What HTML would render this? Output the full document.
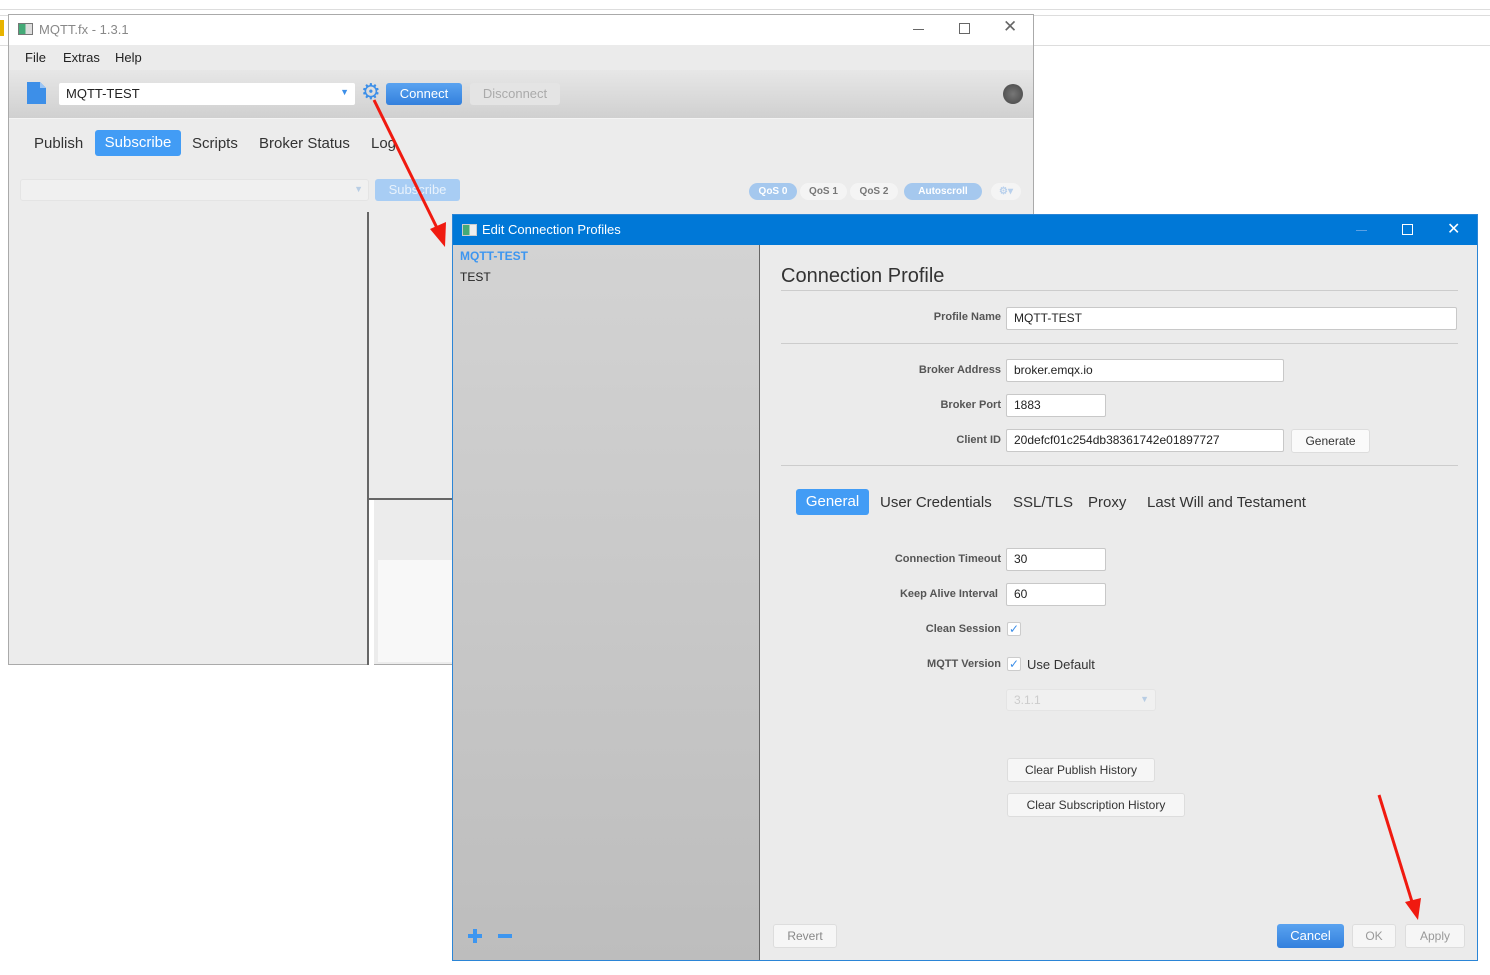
<!DOCTYPE html>
<html><head><meta charset="utf-8"><style>
*{box-sizing:border-box;margin:0;padding:0}
body{width:1490px;height:975px;background:#fff;position:relative;overflow:hidden;font-family:"Liberation Sans",sans-serif;color:#333}
.a{position:absolute}
.inp{position:absolute;background:#fff;border:1px solid #c8c8c8;border-radius:2px;font-size:12px;padding:3px 7px;color:#222;height:23px}
.lbl{position:absolute;font-size:11px;font-weight:bold;color:#555;text-align:right;width:220px}
.btn{position:absolute;background:#f6f6f6;border:1px solid #ddd;border-radius:3px;font-size:12px;color:#333;text-align:center;line-height:22px;height:24px}
.pill{position:absolute;top:182px;height:17px;border-radius:9px;font-size:10px;font-weight:bold;text-align:center;line-height:17px}
.tab{position:absolute;font-size:15px;color:#333}
.chk{position:absolute;width:14px;height:14px;background:#fff;border:1px solid #ccc;border-radius:2px;color:#3d8fe8;font-size:12px;line-height:12px;text-align:center}
</style></head><body>
<div class="a" style="left:0;top:9px;width:1490px;height:1px;background:#ddd"></div>
<div class="a" style="left:0;top:15px;width:1490px;height:1px;background:#ddd"></div>
<div class="a" style="left:0;top:45px;width:1490px;height:1px;background:#ddd"></div>
<div class="a" style="left:0;top:20px;width:4px;height:16px;background:#e8b400"></div>

<!-- main window -->
<div class="a" style="left:8px;top:14px;width:1026px;height:651px;border:1px solid #aaa;background:#ececec">
 <div class="a" style="left:0;top:0;width:1024px;height:30px;background:#fff">
  <div class="a" style="left:9px;top:8px;width:15px;height:12px;border:1px solid #777;background:linear-gradient(90deg,#4a7 0 50%,#ddd 50%)"></div>
  <div class="a" style="left:30px;top:7px;font-size:13px;color:#888">MQTT.fx - 1.3.1</div>
  <div class="a" style="left:904px;top:14px;width:11px;height:1px;background:#666"></div>
  <div class="a" style="left:950px;top:8px;width:11px;height:11px;border:1px solid #666"></div>
  <div class="a" style="left:994px;top:2px;font-size:17px;color:#666">✕</div>
 </div>
 <div class="a" style="left:0;top:30px;width:1024px;height:25px;background:#ebebeb;font-size:13px;color:#222">
  <span class="a" style="left:16px;top:5px">File</span><span class="a" style="left:54px;top:5px">Extras</span><span class="a" style="left:106px;top:5px">Help</span>
 </div>
 <div class="a" style="left:0;top:55px;width:1024px;height:49px;background:linear-gradient(#e7e7e7,#d0d0d0);border-bottom:1px solid #f4f4f4">
  <svg class="a" style="left:18px;top:12px" width="20" height="23"><path d="M0 0H13L19 6V22H0Z" fill="#3d8fe8"/><path d="M13 0V6H19" fill="#9cc6f5"/></svg>
  <div class="inp" style="left:50px;top:13px;width:296px;height:22px;border:none;font-size:13px">MQTT-TEST<span class="a" style="right:6px;top:4px;color:#3d8fe8;font-size:9px">▼</span></div>
  <div class="a" style="left:352px;top:9px;font-size:22px;color:#3d8fe8">⚙</div>
  <div class="a" style="left:377px;top:13px;width:76px;height:22px;border-radius:3px;background:linear-gradient(#5aa3f0,#3380dd);color:#fff;font-size:13px;text-align:center;line-height:22px">Connect</div>
  <div class="a" style="left:461px;top:13px;width:90px;height:22px;border-radius:3px;background:#e4e4e4;color:#aaa;font-size:13px;text-align:center;line-height:22px">Disconnect</div>
  <div class="a" style="left:994px;top:14px;width:20px;height:20px;border-radius:50%;background:radial-gradient(#777,#444)"></div>
 </div>
 <div class="tab" style="left:25px;top:120px">Publish</div>
 <div class="a" style="left:86px;top:115px;width:86px;height:26px;border-radius:3px;background:#429cf5;color:#fff;font-size:15px;text-align:center;line-height:26px">Subscribe</div>
 <div class="tab" style="left:183px;top:120px">Scripts</div>
 <div class="tab" style="left:250px;top:120px">Broker Status</div>
 <div class="tab" style="left:362px;top:120px">Log</div>
 <div class="a" style="left:11px;top:164px;width:349px;height:22px;background:#f0f0f0;border:1px solid #e4e4e4;border-radius:3px"><span class="a" style="right:5px;top:4px;color:#b8cde4;font-size:9px">▼</span></div>
 <div class="a" style="left:366px;top:164px;width:85px;height:22px;border-radius:3px;background:#a8cdf4;color:#e8f2fc;font-size:13px;text-align:center;line-height:22px">Subscribe</div>
 <div class="pill" style="left:740px;top:168px;width:48px;background:#a5c8ee;color:#fff">QoS 0</div>
 <div class="pill" style="left:791px;top:168px;width:47px;background:#f4f4f4;color:#777">QoS 1</div>
 <div class="pill" style="left:841px;top:168px;width:48px;background:#f4f4f4;color:#777">QoS 2</div>
 <div class="pill" style="left:895px;top:168px;width:78px;background:#a5c8ee;color:#fff">Autoscroll</div>
 <div class="pill" style="left:982px;top:168px;width:30px;background:#f4f4f4;color:#b8d0ec">⚙▾</div>
 <div class="a" style="left:358px;top:197px;width:2px;height:453px;background:#666"></div>
 <div class="a" style="left:360px;top:483px;width:90px;height:2px;background:#666"></div>
 <div class="a" style="left:360px;top:485px;width:5px;height:165px;background:#fff"></div>
 <div class="a" style="left:369px;top:545px;width:80px;height:102px;background:#f8f8f8"></div>
</div>

<!-- dialog -->
<div class="a" style="left:452px;top:214px;width:1026px;height:747px;border:1px solid #2b85d6;background:#ebebeb">
 <div class="a" style="left:0;top:0;width:1024px;height:30px;background:#0078d7;color:#fff">
  <div class="a" style="left:9px;top:9px;width:15px;height:12px;border:1px solid #ccc;background:linear-gradient(90deg,#4a7 0 50%,#eee 50%)"></div>
  <div class="a" style="left:29px;top:7px;font-size:13px">Edit Connection Profiles</div>
  <div class="a" style="left:903px;top:15px;width:11px;height:1px;background:#5aa0e4"></div>
  <div class="a" style="left:949px;top:9px;width:11px;height:11px;border:1px solid #fff"></div>
  <div class="a" style="left:994px;top:4px;font-size:16px">✕</div>
 </div>
 <div class="a" style="left:0;top:30px;width:307px;height:715px;background:linear-gradient(#d3d3d3,#bdbdbd);border-right:1px solid #666">
  <div class="a" style="left:7px;top:4px;font-size:12px;font-weight:bold;color:#3d96f0">MQTT-TEST</div>
  <div class="a" style="left:7px;top:25px;font-size:12px;color:#222">TEST</div>
  <div class="a" style="left:15px;top:689px;width:14px;height:4px;background:#3d96f0"></div>
  <div class="a" style="left:20px;top:684px;width:4px;height:14px;background:#3d96f0"></div>
  <div class="a" style="left:45px;top:689px;width:14px;height:4px;background:#3d96f0"></div>
 </div>
 <div class="a" style="left:328px;top:50px;font-size:20px;color:#333">Connection Profile</div>
 <div class="a" style="left:328px;top:75px;width:677px;height:1px;background:#ccc"></div>
 <div class="lbl" style="left:328px;top:96px">Profile Name</div>
 <div class="inp" style="left:553px;top:92px;width:451px">MQTT-TEST</div>
 <div class="a" style="left:328px;top:128px;width:677px;height:1px;background:#ccc"></div>
 <div class="lbl" style="left:328px;top:149px">Broker Address</div>
 <div class="inp" style="left:553px;top:144px;width:278px">broker.emqx.io</div>
 <div class="lbl" style="left:328px;top:184px">Broker Port</div>
 <div class="inp" style="left:553px;top:179px;width:100px">1883</div>
 <div class="lbl" style="left:328px;top:219px">Client ID</div>
 <div class="inp" style="left:553px;top:214px;width:278px">20defcf01c254db38361742e01897727</div>
 <div class="btn" style="left:838px;top:214px;width:79px;background:#fafafa">Generate</div>
 <div class="a" style="left:328px;top:250px;width:677px;height:1px;background:#ccc"></div>
 <div class="a" style="left:343px;top:274px;width:73px;height:26px;border-radius:3px;background:#429cf5;color:#fff;font-size:15px;text-align:center;line-height:26px">General</div>
 <div class="tab" style="left:427px;top:279px">User Credentials</div>
 <div class="tab" style="left:560px;top:279px">SSL/TLS</div>
 <div class="tab" style="left:635px;top:279px">Proxy</div>
 <div class="tab" style="left:694px;top:279px">Last Will and Testament</div>
 <div class="lbl" style="left:328px;top:338px">Connection Timeout</div>
 <div class="inp" style="left:553px;top:333px;width:100px">30</div>
 <div class="lbl" style="left:325px;top:373px">Keep Alive Interval</div>
 <div class="inp" style="left:553px;top:368px;width:100px">60</div>
 <div class="lbl" style="left:328px;top:408px">Clean Session</div>
 <div class="chk" style="left:554px;top:407px">✓</div>
 <div class="lbl" style="left:328px;top:443px">MQTT Version</div>
 <div class="chk" style="left:554px;top:442px">✓</div>
 <div class="a" style="left:574px;top:442px;font-size:13px;color:#333">Use Default</div>
 <div class="a" style="left:553px;top:474px;width:150px;height:22px;background:#f0f0f0;border:1px solid #e4e4e4;border-radius:3px;color:#ccc;font-size:12px;padding:3px 7px">3.1.1<span class="a" style="right:6px;top:4px;color:#b8cde4;font-size:9px">▼</span></div>
 <div class="btn" style="left:554px;top:543px;width:148px">Clear Publish History</div>
 <div class="btn" style="left:554px;top:578px;width:178px">Clear Subscription History</div>
 <div class="btn" style="left:320px;top:709px;width:64px;color:#888">Revert</div>
 <div class="a" style="left:824px;top:709px;width:67px;height:24px;border-radius:3px;background:linear-gradient(#5aa3f0,#3380dd);color:#fff;font-size:13px;text-align:center;line-height:24px">Cancel</div>
 <div class="btn" style="left:899px;top:709px;width:44px;color:#999">OK</div>
 <div class="btn" style="left:952px;top:709px;width:60px;color:#999">Apply</div>
</div>

<svg class="a" style="left:0;top:0" width="1490" height="975">
 <line x1="374" y1="100" x2="439" y2="232" stroke="#f01a10" stroke-width="3"/>
 <polygon points="445,247 430,229 446,222" fill="#f01a10"/>
 <line x1="1379" y1="795" x2="1413" y2="905" stroke="#f01a10" stroke-width="3"/>
 <polygon points="1418,920 1405,902 1421,898" fill="#f01a10"/>
</svg>
</body></html>
